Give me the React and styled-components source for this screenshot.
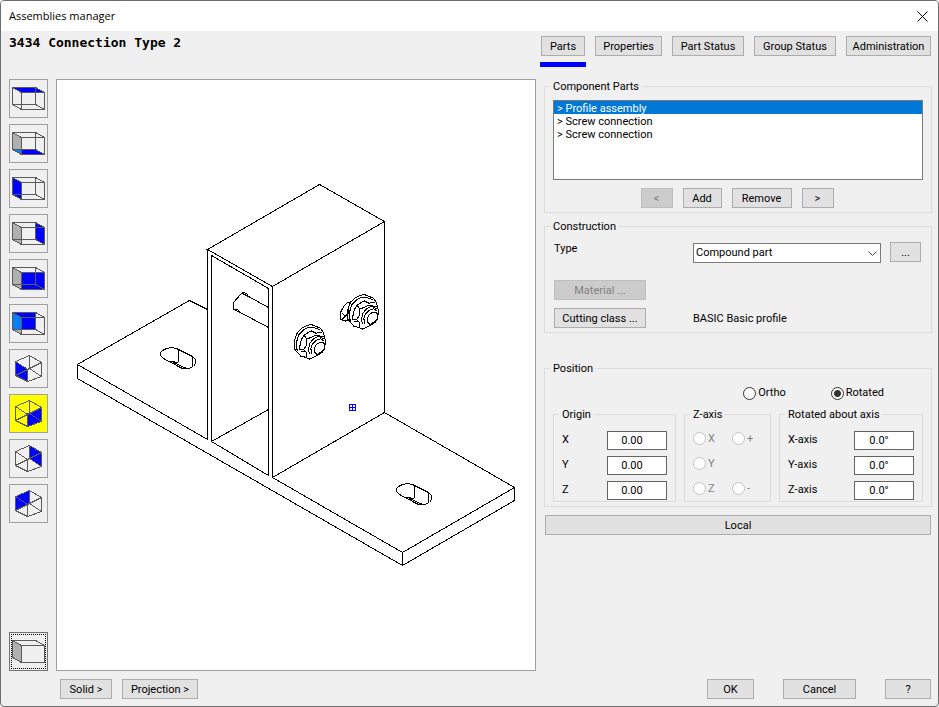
import React, { useState } from "react";
import styled, { createGlobalStyle, css } from "styled-components";

const GlobalStyle = createGlobalStyle`
  *, *::before, *::after { box-sizing: border-box; }
  body { margin: 0; background: #fff; }
  body, button, input, select {
    font-family: Roboto, "Liberation Sans", sans-serif;
    font-size: 11px;
    line-height: 14px;
    color: #000;
  }
`;

const Window = styled.main`
  display: flex;
  flex-direction: column;
  min-height: 100vh;
  border: 1px solid #6d6d6d;
  border-radius: 4px;
  background: #f0f0f0;
  overflow: hidden;
`;

const TitleBar = styled.header`
  display: flex;
  align-items: center;
  justify-content: space-between;
  height: 30px;
  padding: 0 9px 0 8px;
  background: #fff;
`;

const WindowTitle = styled.h1`
  margin: 0;
  font: 400 11px/16px "Open Sans", "Noto Sans", sans-serif;
`;

const CloseButton = styled.button`
  display: flex;
  padding: 0;
  border: 0;
  background: transparent;
`;

const Toolbar = styled.div`
  display: flex;
  justify-content: space-between;
  align-items: flex-start;
  height: 48px;
  padding: 5px 6px 0 8px;
`;

const AssemblyName = styled.h2`
  margin: 0;
  font: 700 13px/14px "DejaVu Sans Mono", monospace;
  white-space: pre;
`;

const Tabs = styled.nav`
  display: flex;
  gap: 8px;
`;

const Tab = styled.div`
  display: flex;
  flex-direction: column;
  gap: 6px;
  &::after {
    content: "";
    height: 5px;
    background: ${(p) => (p.$active ? "#0000ff" : "transparent")};
  }
`;

const Button = styled.button`
  width: ${(p) => (p.$width ? `${p.$width}px` : "auto")};
  height: 20px;
  padding: 1px 4px 0;
  border: 1px solid #adadad;
  background: #e1e1e1;
  line-height: 17px;
  white-space: nowrap;
  &:disabled {
    border-color: #bfbfbf;
    background: #cccccc;
    color: #838383;
  }
`;

const TabButton = styled(Button)`
  margin: 0 1px;
`;

const Workspace = styled.div`
  flex: 1;
  display: grid;
  grid-template-columns: 39px minmax(0, 480fr) minmax(0, 388fr);
  gap: 8px;
  padding: 0 6px 0 8px;
`;

const Rail = styled.div`
  display: flex;
  flex-direction: column;
  gap: 6px;
`;

const ViewButton = styled.button`
  display: flex;
  width: 39px;
  height: 39px;
  padding: 0;
  border: 1px solid #a0a0a0;
  background: ${(p) => (p.$active ? "#ffff00" : "#f0f0f0")};
  ${(p) =>
    p.$focused &&
    css`
      margin-top: auto;
      border: 1px solid #707070;
      outline: 1px dotted #000;
      outline-offset: -3px;
    `}
`;

const Viewport = styled.section`
  display: flex;
  border: 1px solid #a0a0a0;
  background: #fff;
  svg {
    flex: 1;
    min-width: 0;
  }
`;

const Panel = styled.div`
  display: flex;
  flex-direction: column;
`;

const Group = styled.fieldset`
  min-width: 0;
  margin: 0 0 ${(p) => p.$after || 0}px;
  padding: 0;
  border: 1px solid #dcdcdc;
`;

const GroupTitle = styled.legend`
  margin-left: 5px;
  padding: 0 2px 0 3px;
  height: 14px;
  line-height: 16px;
`;

const PartsBody = styled.div`
  padding: 7px 8px 4px;
`;

const PartsList = styled.ul`
  height: 80px;
  margin: 0;
  padding: 0;
  border: 1px solid #7a7a7a;
  background: #fff;
  list-style: none;
`;

const PartItem = styled.li`
  height: 13px;
  padding-left: 3px;
  line-height: 15px;
  ${(p) =>
    p.$selected &&
    css`
      background: #0078d7;
      color: #fff;
    `}
`;

const PartsActions = styled.div`
  display: flex;
  justify-content: center;
  gap: 10px;
  margin-top: 8px;
  padding-right: 2px;
`;

const ConstructionBody = styled.div`
  display: grid;
  grid-template-columns: 130px minmax(0, 1fr) 31px;
  column-gap: 9px;
  row-gap: 8px;
  padding: 9px 10px 4px 9px;
`;

const TypeLabel = styled.label`
  height: 30px;
`;

const TypeSelect = styled.div`
  position: relative;
  height: 20px;
  svg {
    position: absolute;
    right: 4px;
    top: 9px;
    pointer-events: none;
  }
`;

const Select = styled.select`
  appearance: none;
  width: 100%;
  height: 20px;
  margin-top: 1px;
  padding: 0 2px;
  border: 1px solid #7a7a7a;
  border-radius: 0;
  background: #fff;
`;

const ClassName = styled.span`
  height: 20px;
  line-height: 22px;
`;

const RowStart = styled(Button)`
  grid-column: 1;
`;

const PositionBody = styled.div`
  padding: 11px 8px 4px;
`;

const ModeRow = styled.div`
  display: flex;
  justify-content: flex-end;
  gap: 45px;
  margin-bottom: 7px;
  padding-right: 39px;
`;

const RadioLabel = styled.label`
  display: flex;
  align-items: center;
  gap: 2px;
  height: ${(p) => (p.$tall ? 19 : 14)}px;
  line-height: 16px;
  color: ${(p) => (p.$disabled ? "#838383" : "#000")};
`;

const Radio = styled.input`
  appearance: none;
  flex: none;
  width: 13px;
  height: 13px;
  margin: 0;
  border: 1px solid #333;
  border-radius: 50%;
  background: #fff;
  &:checked {
    background: radial-gradient(circle, #333 0 3px, #fff 4px);
  }
  &:disabled {
    border-color: #c4c4c4;
  }
`;

const AxisGroups = styled.div`
  display: grid;
  grid-template-columns: 123fr 87fr 144fr;
  gap: 8px;
`;

const AxisRows = styled.div`
  display: flex;
  flex-direction: column;
  gap: 6px;
  padding: 10px 8px 1px;
`;

const AxisRow = styled.div`
  display: flex;
  justify-content: space-between;
  height: 19px;
  line-height: 18px;
`;

const AxisInput = styled.input`
  width: 60px;
  height: 19px;
  padding: 0 10px 0 0;
  border: 1px solid #646464;
  text-align: center;
`;

const SignGrid = styled.div`
  display: grid;
  grid-template-columns: 39px 1fr;
  row-gap: 6px;
  padding: 8px 8px 3px;
`;

const LocalButton = styled(Button)`
  margin: 0 1px;
`;

const Footer = styled.footer`
  display: flex;
  justify-content: space-between;
  padding: 8px 7px 7px 59px;
`;

const FooterGroup = styled.div`
  display: flex;
  gap: ${(p) => p.$gap}px;
`;

const BLUE = "#0000ff";
const SKY = "#0080ff";
const GREY = "#b0b0b0";
const LEFT = "3.5,8.5 12.5,13.5 12.5,30.5 3.5,25.5";
const LEFT_UPPER = "3.5,8.5 12.5,13.5 12.5,25.5 3.5,25.5";
const LEFT_CORNER = "3.5,25.5 12.5,25.5 12.5,30.5";

const VIEWS = [
  { name: "Top", faces: [["3.5,8.5 26.5,8.5 35.5,13.5 12.5,13.5", BLUE]] },
  {
    name: "Bottom",
    faces: [
      [LEFT_UPPER, GREY],
      [LEFT_CORNER, SKY],
      ["12.5,25.5 26.5,25.5 35.5,30.5 12.5,30.5", BLUE],
    ],
  },
  { name: "Left", faces: [[LEFT, BLUE]] },
  { name: "Right", faces: [[LEFT, GREY], ["26.5,8.5 35.5,13.5 35.5,30.5 26.5,25.5", BLUE]] },
  { name: "Front", faces: [[LEFT, GREY], ["12.5,13.5 35.5,13.5 35.5,30.5 12.5,30.5", BLUE]] },
  {
    name: "Back",
    faces: [
      ["3.5,8.5 26.5,8.5 26.5,25.5 3.5,25.5", BLUE],
      [LEFT_UPPER, SKY],
      [LEFT_CORNER, GREY],
    ],
  },
  { name: "Isometric front left", iso: true, faces: [["6.5,12.5 18.5,19.5 18.5,32.5 6.5,26.5", BLUE]] },
  { name: "Isometric front right", iso: true, faces: [["18.5,19.5 32.5,13.5 32.5,27.5 18.5,32.5", BLUE]] },
  { name: "Isometric back right", iso: true, faces: [["20.5,6.5 32.5,13.5 32.5,27.5 20.5,19.5", BLUE]] },
  { name: "Isometric back left", iso: true, faces: [["6.5,12.5 20.5,6.5 20.5,19.5 6.5,26.5", BLUE]] },
];

const WIRE = "M3.5 8.5H26.5V25.5H3.5ZM12.5 13.5H35.5V30.5H12.5ZM3.5 8.5L12.5 13.5M26.5 8.5L35.5 13.5M26.5 25.5L35.5 30.5M3.5 25.5L12.5 30.5";
const ISO = "M6.5 12.5L20.5 6.5L32.5 13.5V27.5L18.5 32.5L6.5 26.5ZM20.5 6.5V19.5L6.5 26.5M20.5 19.5L32.5 27.5M6.5 12.5L18.5 20.5V32.5M18.5 20.5L32.5 13.5";
const SOLID = "M12.5 13.5H35.5V30.5H12.5ZM3.5 8.5H26.5L35.5 13.5M3.5 8.5V25.5L12.5 30.5M3.5 8.5L12.5 13.5";

function ViewIcon({ faces, path }) {
  return (
    <svg width="37" height="37" viewBox="1 1 37 37" shapeRendering="crispEdges" aria-hidden="true">
      {faces.map(([points, fill]) => (
        <polygon key={points} points={points} fill={fill} />
      ))}
      <path d={path} fill="none" stroke="#5a5a5a" />
    </svg>
  );
}

const NUT = `M72 180L80 158L95 142L110 135L122 132L135 137L150 143L158 155L162 170L165 182L162 205L155 215
  L140 225L118 236L105 230L92 228L80 215L72 205Z
  M80 213L78 185L85 163L100 147L115 140L130 141L148 148
  M86 206L99 207L108 195L109 176L101 164L93 176L86 206
  M101 164L122 151L136 158L156 156M109 176L134 165L160 168
  M99 207L108 216V230M92 213L102 212
  M117 222L114 205L118 188L130 174L145 167L160 175
  M124 221L121 204L126 190L138 179L150 175L162 182
  M134 218L131 205L137 193L148 185L158 186L161 190V205L153 214L140 222L134 218`;

function AssemblyDrawing() {
  return (
    <svg
      viewBox="57 80 478 590"
      fill="none"
      stroke="#000"
      shapeRendering="crispEdges"
      role="img"
      aria-label="Isometric view of the connection"
    >
      <path
        d="M207.5 249.5L319.5 184.5L384.5 221.5L272.5 286.5ZM207.5 249.5V439.5M211.5 441.5V255.5L268.5 288.5V475.5
        M272.5 286.5V477.5L384.5 412.5V221.5M211.5 441.5L268.5 409.5M211.5 441.5L268.5 475.5
        M207.5 309.5L189.5 300.5L77.5 364.5L207.5 439.5M77.5 364.5V378.5L402.5 565.5L514.5 500.5V487.5L384.5 412.5
        M272.5 477.5L402.5 552.5L514.5 487.5M402.5 552.5V565.5"
      />
      <path
        d="M268.5 307.5L248.5 296.5L246.5 293.5L243.5 292.5L241.5 293.5L233.5 302.5V309.5L238.5 311.5L268.5 327.5
        M242.5 293.5L246.5 295.5M243.5 294.5L248.5 296.5M234.5 309.5L237.5 309.5L240.5 312.5"
      />
      <g id="slot">
        <path
          d="M160.5 352.5L162.5 350.5L166.5 348.5L171.5 347.5L176.5 348.5L192.5 356.5L195.5 359.5V363.5L193.5 366.5
          L188.5 368.5L182.5 368.5L178.5 366.5L163.5 358.5L160.5 355.5ZM178.5 349.5V361.5M170.5 361.5L178.5 362.5
          M173.5 362.5L186.5 368.5M192.5 356.5V366.5"
        />
      </g>
      <use href="#slot" x="236" y="136" />
      <g transform="translate(270.5 280.5) scale(0.3333)">
        <path id="nut" d={NUT} vectorEffect="non-scaling-stroke" />
        <use href="#nut" x="159" y="-90" />
        <path
          vectorEffect="non-scaling-stroke"
          d="M243 64L232 66L220 77L211 94V117L224 122L236 116M214 97L224 108L214 117M224 108L234 98V80M236 116L240 125"
        />
      </g>
      <path d="M349.5 404.5H355.5V410.5H349.5ZM352.5 404.5V410.5M349.5 407.5H355.5" stroke={BLUE} />
    </svg>
  );
}

const TABS = [
  ["Parts", 44],
  ["Properties", 67],
  ["Part Status", 72],
  ["Group Status", 82],
  ["Administration", 85],
];
const PARTS = ["Profile assembly", "Screw connection", "Screw connection"];

function AxisField({ id, label, initial }) {
  return (
    <AxisRow>
      <label htmlFor={id}>{label}</label>
      <AxisInput id={id} defaultValue={initial} />
    </AxisRow>
  );
}

function AxisChoice({ name, label }) {
  return (
    <RadioLabel $tall $disabled>
      <Radio type="radio" name={name} disabled />
      {label}
    </RadioLabel>
  );
}

export default function App() {
  const [tab, setTab] = useState("Parts");
  const [view, setView] = useState(7);
  const [part, setPart] = useState(0);
  const [mode, setMode] = useState("Rotated");

  return (
    <>
      <GlobalStyle />
      <Window>
        <TitleBar>
          <WindowTitle>Assemblies manager</WindowTitle>
          <CloseButton aria-label="Close">
            <svg width="13" height="13" viewBox="0 0 13 13" stroke="#000" fill="none">
              <path d="M1.5 1.5L11.5 11.5M11.5 1.5L1.5 11.5" />
            </svg>
          </CloseButton>
        </TitleBar>

        <Toolbar>
          <AssemblyName>3434 Connection Type 2</AssemblyName>
          <Tabs>
            {TABS.map(([name, width]) => (
              <Tab key={name} $active={name === tab}>
                <TabButton $width={width} onClick={() => setTab(name)}>
                  {name}
                </TabButton>
              </Tab>
            ))}
          </Tabs>
        </Toolbar>

        <Workspace>
          <Rail>
            {VIEWS.map((v, i) => (
              <ViewButton key={v.name} aria-label={v.name} $active={i === view} onClick={() => setView(i)}>
                <ViewIcon faces={v.faces} path={v.iso ? ISO : WIRE} />
              </ViewButton>
            ))}
            <ViewButton $focused aria-label="Solid box">
              <ViewIcon faces={[[LEFT, GREY]]} path={SOLID} />
            </ViewButton>
          </Rail>

          <Viewport>
            <AssemblyDrawing />
          </Viewport>

          <Panel>
            <Group $after={6}>
              <GroupTitle>Component Parts</GroupTitle>
              <PartsBody>
                <PartsList role="listbox" aria-label="Component Parts">
                  {PARTS.map((name, i) => (
                    <PartItem
                      key={i}
                      role="option"
                      aria-selected={i === part}
                      $selected={i === part}
                      onClick={() => setPart(i)}
                    >
                      {"> " + name}
                    </PartItem>
                  ))}
                </PartsList>
                <PartsActions>
                  <Button $width={32} disabled>
                    &lt;
                  </Button>
                  <Button $width={39}>Add</Button>
                  <Button $width={60}>Remove</Button>
                  <Button $width={32}>&gt;</Button>
                </PartsActions>
              </PartsBody>
            </Group>

            <Group $after={28}>
              <GroupTitle>Construction</GroupTitle>
              <ConstructionBody>
                <TypeLabel htmlFor="type">Type</TypeLabel>
                <TypeSelect>
                  <Select id="type" defaultValue="Compound part">
                    <option>Compound part</option>
                  </Select>
                  <svg width="9" height="6" viewBox="0 0 9 6" fill="none" stroke="#444">
                    <path d="M0.5 0.5L4.5 4.5L8.5 0.5" />
                  </svg>
                </TypeSelect>
                <Button aria-label="Browse types">...</Button>
                <RowStart $width={92} disabled>
                  Material ...
                </RowStart>
                <RowStart $width={92}>Cutting class ...</RowStart>
                <ClassName>BASIC Basic profile</ClassName>
              </ConstructionBody>
            </Group>

            <Group $after={8}>
              <GroupTitle>Position</GroupTitle>
              <PositionBody>
                <ModeRow>
                  {["Ortho", "Rotated"].map((m) => (
                    <RadioLabel key={m}>
                      <Radio type="radio" name="mode" checked={m === mode} onChange={() => setMode(m)} />
                      {m}
                    </RadioLabel>
                  ))}
                </ModeRow>
                <AxisGroups>
                  <Group>
                    <GroupTitle>Origin</GroupTitle>
                    <AxisRows>
                      {["X", "Y", "Z"].map((a) => (
                        <AxisField key={a} id={"origin-" + a} label={a} initial="0.00" />
                      ))}
                    </AxisRows>
                  </Group>
                  <Group>
                    <GroupTitle>Z-axis</GroupTitle>
                    <SignGrid>
                      <AxisChoice name="axis" label="X" />
                      <AxisChoice name="sign" label="+" />
                      <AxisChoice name="axis" label="Y" />
                      <span />
                      <AxisChoice name="axis" label="Z" />
                      <AxisChoice name="sign" label="-" />
                    </SignGrid>
                  </Group>
                  <Group>
                    <GroupTitle>Rotated about axis</GroupTitle>
                    <AxisRows>
                      {["X", "Y", "Z"].map((a) => (
                        <AxisField key={a} id={"rotation-" + a} label={a + "-axis"} initial="0.0°" />
                      ))}
                    </AxisRows>
                  </Group>
                </AxisGroups>
              </PositionBody>
            </Group>

            <LocalButton>Local</LocalButton>
          </Panel>
        </Workspace>

        <Footer>
          <FooterGroup $gap={10}>
            <Button $width={52}>Solid &gt;</Button>
            <Button $width={76}>Projection &gt;</Button>
          </FooterGroup>
          <FooterGroup $gap={29}>
            <Button $width={47}>OK</Button>
            <Button $width={73}>Cancel</Button>
            <Button $width={46}>?</Button>
          </FooterGroup>
        </Footer>
      </Window>
    </>
  );
}
